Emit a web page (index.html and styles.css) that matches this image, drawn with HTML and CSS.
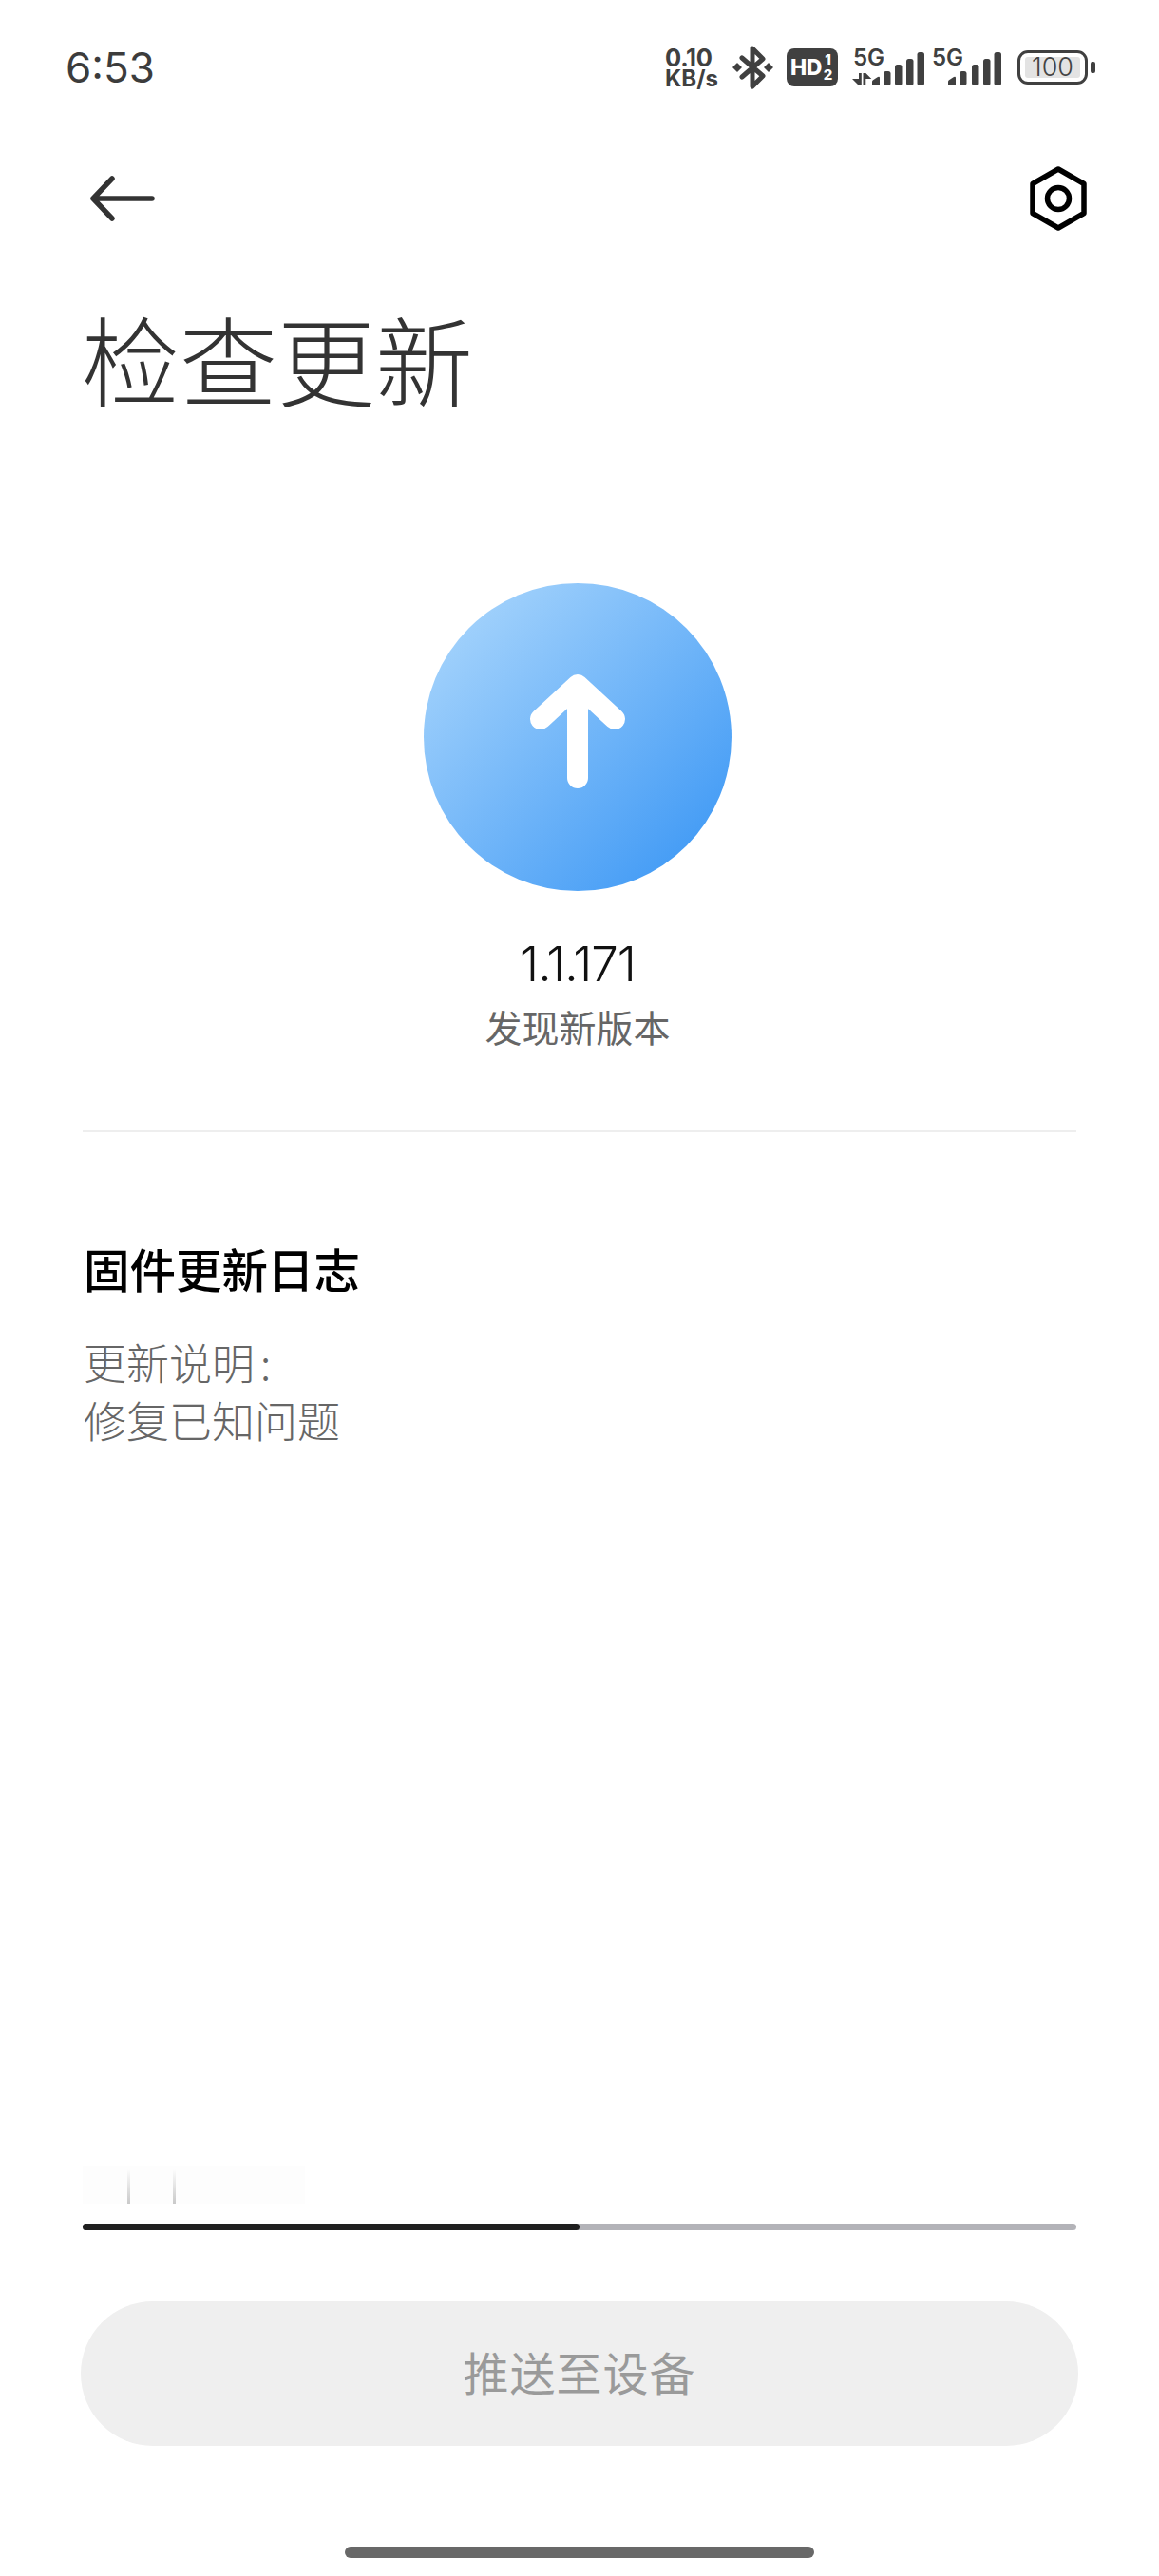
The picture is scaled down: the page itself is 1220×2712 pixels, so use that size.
FILE: index.html
```html
<!DOCTYPE html>
<html lang="zh-CN">
<head>
<meta charset="utf-8">
<title>检查更新</title>
<link rel="stylesheet" href="styles.css">
</head>
<body>
<div class="screen">
  <header class="statusbar">
    <div class="time">6:53</div>
    <div class="status-icons">
      <div class="speed"><span class="speed-value">0.10</span><span class="speed-unit">KB/s</span></div>
      <svg class="bt" width="44" height="46" viewBox="0 0 44 46" fill="none" stroke="#404040" stroke-width="5" stroke-linejoin="round" stroke-linecap="round">
        <path d="M10 13 L32 32 L21 43 V3 L32 14 L10 33"/>
        <path class="bt-dot" d="M5 19 L9 23 L5 27 L1 23Z M38 19 L42 23 L38 27 L34 23Z" stroke-width="1.500" fill="#404040"/>
      </svg>
      <div class="hd"><span class="hd-text">HD</span><span class="hd-sub"><span>1</span><span>2</span></span></div>
      <svg class="sig1" width="78" height="54" viewBox="0 -5 78 54">
        <text class="sig-text" x="2" y="20">5G</text>
        <g fill="#404040">
          <path d="M8 28h2.800v13h-2.800l-7-7h7z"/>
          <path d="M12.500 28h2.800l6 6h-6v7h-2.800z"/>
          <path d="M22 41v-4q0-1 1-1.800l5-3.200q2-1 2 1v8z"/>
          <rect x="34" y="26" width="7.500" height="15" rx="2.500"/>
          <rect x="46" y="19" width="7.500" height="22" rx="2.500"/>
          <rect x="58" y="13" width="7.500" height="28" rx="2.500"/>
          <rect x="69.500" y="6" width="7.500" height="35" rx="2.500"/>
        </g>
      </svg>
      <svg class="sig2" width="74" height="54" viewBox="0 -5 74 54">
        <text class="sig-text" x="1" y="20">5G</text>
        <g fill="#404040">
          <path d="M18 41v-4q0-1 1-1.800l5-3.200q2-1 2 1v8z"/>
          <rect x="30" y="26" width="7.500" height="15" rx="2.500"/>
          <rect x="43" y="19" width="7.500" height="22" rx="2.500"/>
          <rect x="55" y="13" width="7.500" height="28" rx="2.500"/>
          <rect x="66.500" y="6" width="7.500" height="35" rx="2.500"/>
        </g>
      </svg>
      <div class="battery"><div class="battery-body"><div class="battery-level">100</div></div><div class="battery-tip"></div></div>
    </div>
  </header>

  <nav class="nav">
    <svg width="68" height="48" viewBox="0 0 68 48" fill="none" stroke="#333" stroke-width="5.500" stroke-linecap="round" stroke-linejoin="round">
      <path d="M65 24 H3 M23 3 L3 24 L23 45"/>
    </svg>
    <svg width="62" height="68" viewBox="0 0 62 68" fill="none" stroke="#000" stroke-width="5.500" stroke-linejoin="round">
      <path d="M31 3 L58 18.500 V49.500 L31 65 L4 49.500 V18.500 Z"/>
      <circle cx="31" cy="34" r="11.500"/>
    </svg>
  </nav>

  <h1 class="title">检查更新</h1>

  <section class="hero">
    <div class="badge">
      <svg width="102" height="120" viewBox="0 0 102 120" fill="none" stroke="#fff" stroke-width="22" stroke-linecap="round" stroke-linejoin="round">
        <path d="M51 109 V12 M12 47 L51 11 L90 47"/>
      </svg>
    </div>
    <div class="version">1.1.171</div>
    <div class="found">发现新版本</div>
  </section>

  <div class="divider"></div>

  <section class="notes">
    <h2 class="notes-title">固件更新日志</h2>
    <p class="notes-body">更新说明<span class="colon">:</span><br>修复已知问题</p>
  </section>

  <div class="fade-row"><span class="fade-line"></span><span class="fade-line"></span></div>
  <div class="progress"><div class="progress-fill"></div></div>
  <button class="push" type="button">推送至设备</button>
  <div class="home-bar"></div>
</div>
</body>
</html>
```

FILE: styles.css
```css
* { box-sizing: border-box; }
html, body { margin: 0; padding: 0; background: #fff; }
body { font-family: "Noto Sans CJK SC", "Noto Sans", sans-serif; }

.screen {
  width: 1220px;
  height: 2712px;
  display: flex;
  flex-direction: column;
  overflow: hidden;
  background: #fff;
}

.statusbar {
  height: 142px;
  padding: 0 67px 0 69px;
  display: flex;
  justify-content: space-between;
  align-items: center;
  flex: none;
}
.time {
  font: 400 44px/1 Inter, sans-serif;
  color: #3c3c3c;
}
.status-icons { display: flex; align-items: center; }
.speed {
  display: flex;
  flex-direction: column;
  font-family: Inter, sans-serif;
  font-weight: 700;
  color: #404040;
  width: 60px;
  margin-right: 11px;
}
.speed-value { font-size: 25.500px; line-height: 23px; letter-spacing: -0.300px; }
.speed-unit { font-size: 24px; line-height: 21px; }
.bt { margin-right: 13px; }
.hd {
  width: 54px;
  height: 40px;
  background: #404040;
  border-radius: 8px;
  color: #fff;
  font-family: Inter, sans-serif;
  font-weight: 800;
  display: flex;
  align-items: center;
  padding-left: 4px;
  margin-right: 14px;
}
.hd-text { font-size: 23px; line-height: 1; letter-spacing: -0.500px; }
.hd-sub {
  display: flex;
  flex-direction: column;
  align-items: center;
  font-size: 15px;
  line-height: 16px;
  margin-left: 2px;
}
.sig1 { margin-right: 6px; }
.sig-text {
  font-family: Inter, sans-serif;
  font-weight: 600;
  font-size: 24px;
  fill: #404040;
}
.sig2 { margin-right: 17px; }
.battery { display: flex; align-items: center; }
.battery-body {
  width: 74px;
  height: 36px;
  border: 3.500px solid #404040;
  border-radius: 11px;
  display: flex;
  align-items: center;
  justify-content: center;
}
.battery-level {
  width: 58px;
  height: 22px;
  background: #e3e3e3;
  border-radius: 3px;
  color: #444;
  font: 300 27px/22px Inter, sans-serif;
  text-align: center;
}
.battery-tip {
  width: 5px;
  height: 12px;
  background: #404040;
  border-radius: 2px;
  margin-left: 3px;
}

.nav {
  height: 134px;
  padding: 0 75px 0 95px;
  display: flex;
  justify-content: space-between;
  align-items: center;
  flex: none;
}

.title {
  margin: 41px 0 0;
  padding-left: 86px;
  font-size: 103px;
  line-height: 120px;
  font-weight: 300;
  color: #333;
}

.hero {
  margin-top: 177px;
  display: flex;
  flex-direction: column;
  align-items: center;
  padding-right: 4px;
}
.badge {
  width: 324px;
  height: 324px;
  border-radius: 50%;
  background: linear-gradient(135deg, #a6d4fc 8%, #3f99f5 92%);
  display: flex;
  align-items: center;
  justify-content: center;
  padding-bottom: 13px;
}
.version {
  margin-top: 47px;
  font: 300 51px/60px Inter, sans-serif;
  letter-spacing: -1px;
  color: #111;
}
.found {
  margin-top: 5px;
  font-size: 39px;
  line-height: 60px;
  color: #666;
}

.divider {
  margin: 80px 87px 0;
  height: 2px;
  background: #eee;
  flex: none;
}

.notes { padding-left: 88px; }
.notes-title {
  margin: 111px 0 0;
  font-size: 48.500px;
  line-height: 64px;
  font-weight: 500;
  color: #000;
}
.notes-body {
  margin: 36px 0 0;
  font-size: 45px;
  line-height: 61px;
  font-weight: 300;
  color: #666;
}
.colon { margin-left: 6px; }

.fade-row {
  margin-top: auto;
  margin-left: 87px;
  width: 234px;
  height: 40px;
  display: flex;
  gap: 45px;
  padding-left: 47px;
  background: #fdfdfd;
  flex: none;
}
.fade-line {
  width: 3px;
  height: 100%;
  background: linear-gradient(to bottom, #fdfdfd 10%, #c9c9c9 100%);
}

.progress {
  margin: 21px 87px 0;
  height: 7px;
  border-radius: 4px;
  background: #b3b3b8;
  flex: none;
}
.progress-fill {
  width: 50%;
  height: 100%;
  border-radius: 4px;
  background: #1f1f1f;
}

.push {
  margin: 75px 85px 0;
  height: 152px;
  padding: 0 0 6px;
  border: 0;
  border-radius: 76px;
  background: #efefef;
  color: #9a9a9a;
  font-family: inherit;
  font-size: 48px;
  letter-spacing: 1px;
  flex: none;
}

.home-bar {
  margin: 106px 363px 19px;
  height: 12px;
  border-radius: 6px;
  background: #686868;
  flex: none;
}
```
